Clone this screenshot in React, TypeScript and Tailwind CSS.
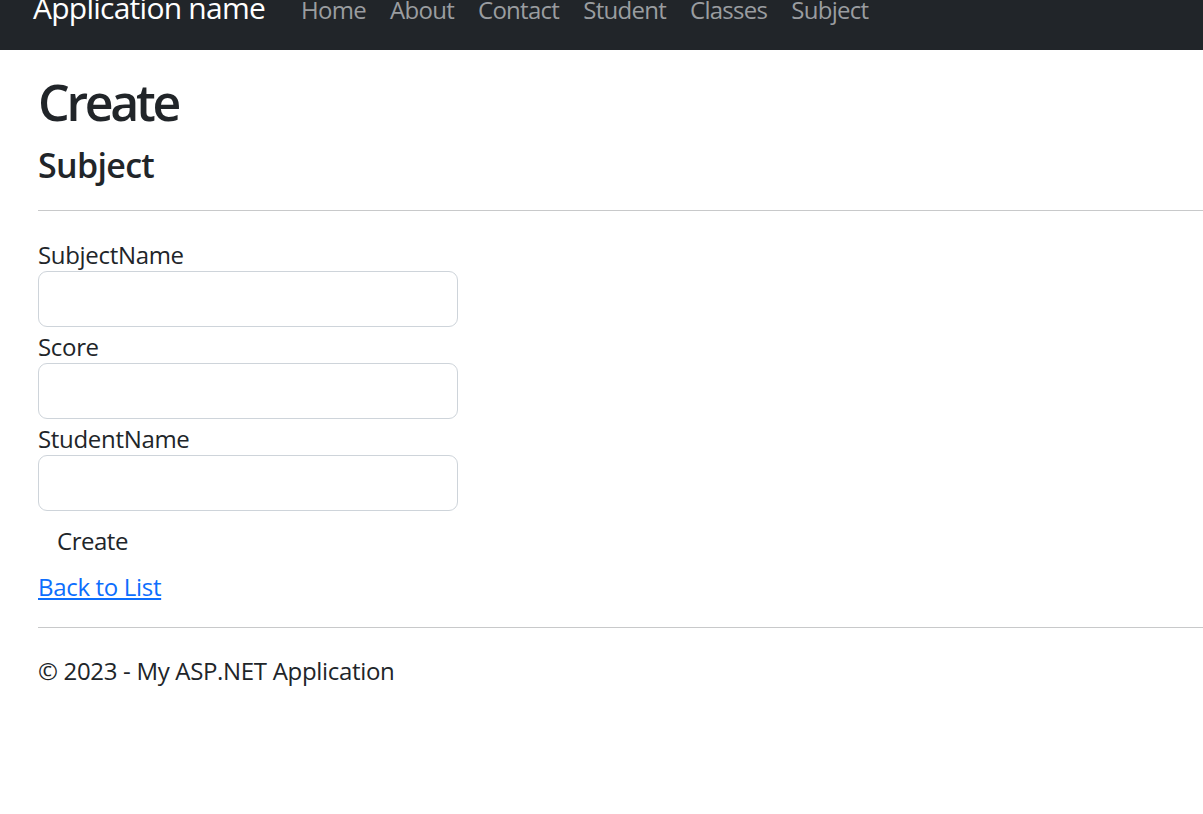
const navLinks = ['Home', 'About', 'Contact', 'Student', 'Classes', 'Subject'];

const fields = ['SubjectName', 'Score', 'StudentName'];

export default function App() {
    return (
        <div className="min-h-[814px] bg-white text-[#212529] font-['Open_Sans',sans-serif] tracking-[-0.02em]">
            <nav className="h-[50px] overflow-hidden bg-[#212529]">
                <div className="-mt-[7px] flex items-baseline pl-[33px]">
                    <a href="#" className="text-[30px] leading-[30px] tracking-[-0.025em] text-white">Application name</a>
                    <ul className="ml-[24px] flex items-baseline">
                        {navLinks.map((link) => (
                            <li key={link}>
                                <a href="#" className="px-[12px] text-[24px] leading-[30px] tracking-[-0.03em] text-[#9a9da0]">{link}</a>
                            </li>
                        ))}
                    </ul>
                </div>
            </nav>

            <div className="pl-[38px] pt-[22px]">
                <h1 className="text-[50px] font-semibold leading-[61px] tracking-[-0.065em]">Create</h1>
                <h4 className="mt-[12px] text-[34px] font-semibold leading-[41px] tracking-[-0.02em]">Subject</h4>
                <hr className="mt-[24px] border-t border-[#c8c9ca]" />

                <form className="mt-[24px] flex flex-col" onSubmit={(e) => e.preventDefault()}>
                    {fields.map((field) => (
                        <div key={field} className="flex flex-col">
                            <label className="text-[24px] leading-[36px] pt-[2px] -mb-[2px]">{field}</label>
                            <input
                                type="text"
                                className="h-[56px] w-[420px] rounded-[9px] border border-[#ced4da] px-[18px] text-[24px] outline-none"
                            />
                        </div>
                    ))}
                    <div>
                        <button type="submit" className="border border-transparent px-[18px] py-[9px] text-[24px] leading-[36px] tracking-[-0.02em]">
                            <span className="relative top-[2px]">Create</span>
                        </button>
                    </div>
                </form>

                <div className="text-[24px] leading-[36px] pt-[2px] -mb-[2px]">
                    <a href="#" className="text-[#0d6efd] underline">Back to List</a>
                </div>

                <hr className="mt-[24px] border-t border-[#c8c9ca]" />
                <footer className="pt-[24px]">
                    <p className="text-[24px] leading-[36px] pt-[1px]">© 2023 - My ASP.NET Application</p>
                </footer>
            </div>
        </div>
    )
}
